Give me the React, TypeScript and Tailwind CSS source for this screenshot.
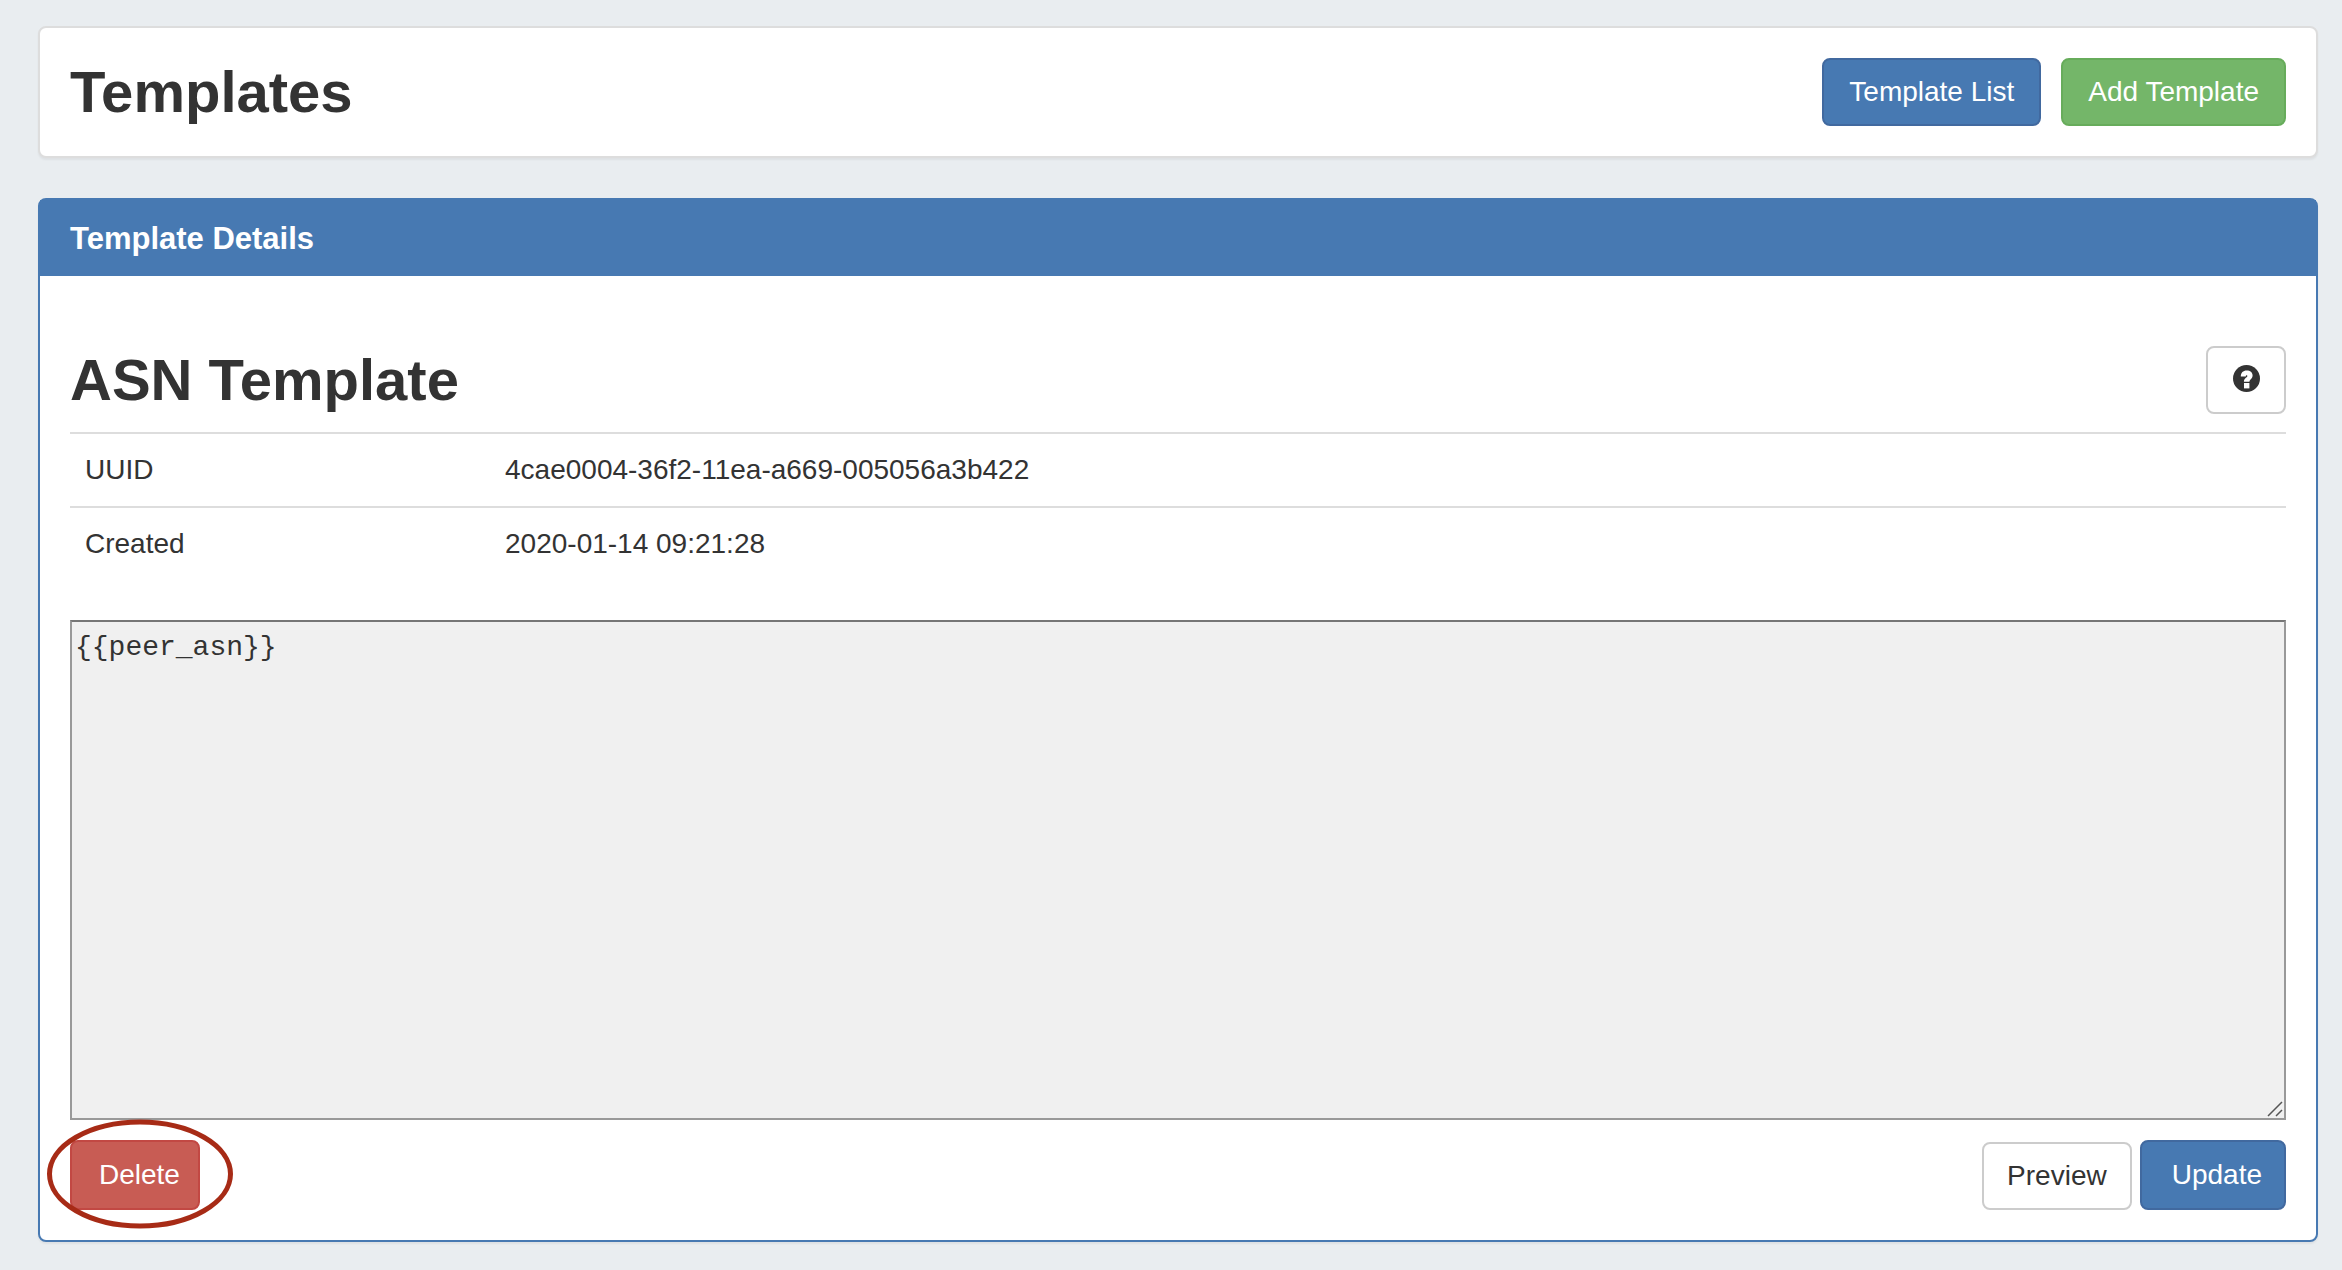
import type {ReactNode} from 'react';

const buttonBase = 'rounded-lg border-2 text-[28px] leading-10 whitespace-nowrap';

const details = [
  {label: 'UUID', value: '4cae0004-36f2-11ea-a669-005056a3b422'},
  {label: 'Created', value: '2020-01-14 09:21:28'},
];

const Button = ({className, children}: {className: string; children: ReactNode}) => {
  return (
    <button type="button" className={`${buttonBase} ${className}`}>
      {children}
    </button>
  );
};

const QuestionIcon = () => {
  return (
    <svg viewBox="0 0 27 27" className="size-[27px]" aria-hidden="true">
      <circle cx="13.5" cy="13.5" r="13.5" fill="#333333" />
      <path
        d="M7.8 11.6C7.8 7.8 10 5.6 13.7 5.6c3.5 0 5.9 2 5.9 4.900 0 3.300-2.900 3.900-3.200 6.200h-5.500c0-3.800 3.500-4.100 3.500-5.700 0-.500-.300-.800-.800-.800-.600 0-.800.500-.800 1.400z"
        fill="#ffffff"
      />
      <rect x="11" y="18" width="5.4" height="5.4" fill="#ffffff" />
    </svg>
  );
};

export default function App() {
  return (
    <main className="min-h-screen bg-[#e9edf0] pt-[26px] pr-6 pb-7 pl-[38px] font-['Liberation_Sans',Arial,sans-serif] text-[28px] leading-10 text-[#333333]">
      <header className="flex items-center justify-between rounded-lg border-2 border-[#dddddd] bg-white px-[30px] py-[30px] shadow-[0_2px_2px_rgba(0,0,0,0.05)]">
        <h1 className="text-[58px] leading-[68px] font-bold">Templates</h1>
        <div className="flex gap-5">
          <Button className="border-[#41699f] bg-[#4779b2] px-[25px] py-3 text-white">Template List</Button>
          <Button className="border-[#67ac5b] bg-[#74b669] px-[25px] py-3 text-white">Add Template</Button>
        </div>
      </header>

      <section className="mt-10 rounded-lg border-2 border-[#4779b2] bg-white shadow-[0_2px_2px_rgba(0,0,0,0.05)]">
        <h2 className="bg-[#4779b2] px-[30px] pt-[19px] pb-[17px] text-[31px] leading-10 font-bold text-white">
          Template Details
        </h2>

        <div className="px-[30px] pt-[70px] pb-[30px]">
          <div className="flex items-center justify-between">
            <h3 className="text-[58px] leading-[68px] font-bold">ASN Template</h3>
            <button
              type="button"
              aria-label="Help"
              className="flex h-[68px] w-20 items-center justify-center rounded-lg border-2 border-[#cccccc] bg-white pb-1"
            >
              <QuestionIcon />
            </button>
          </div>

          <table className="mt-[18px] w-full border-separate border-spacing-0 text-left">
            <tbody>
              {details.map(({label, value}) => (
                <tr key={label}>
                  <th scope="row" className="w-[19%] border-t-2 border-[#dddddd] px-[15px] py-4 font-normal">
                    {label}
                  </th>
                  <td className="border-t-2 border-[#dddddd] px-[14px] py-4">{value}</td>
                </tr>
              ))}
            </tbody>
          </table>

          <div className="relative mt-10">
            <textarea
              aria-label="Template"
              defaultValue="{{peer_asn}}"
              className="block h-[500px] w-full resize-none border-2 border-[#999999] border-t-[#767676] bg-[#f0f0f0] px-[3px] py-[6px] font-['Liberation_Mono',monospace] text-[28px] leading-10"
            />
            {/* resize grip */}
            <svg viewBox="0 0 16 16" className="absolute right-[3px] bottom-[3px] size-4" aria-hidden="true">
              <path d="M1 15 15 1M9 15l6-6" stroke="#555555" strokeWidth="1.5" fill="none" />
            </svg>
          </div>

          <div className="mt-5 flex items-end justify-between">
            <div className="relative">
              <Button className="border-[#c24843] bg-[#c85c54] py-[13px] pr-[18px] pl-[27px] text-white">Delete</Button>
              {/* highlight ring */}
              <svg
                viewBox="0 0 188 110"
                className="pointer-events-none absolute -top-[21px] -left-6 h-[110px] w-[188px]"
                aria-hidden="true"
              >
                <ellipse cx="94" cy="55" rx="90.5" ry="52" stroke="#a72b16" strokeWidth="5" fill="none" />
              </svg>
            </div>
            <div className="flex items-end gap-2">
              <Button className="border-[#cccccc] bg-white px-[23px] py-3">Preview</Button>
              <Button className="border-[#41699f] bg-[#4779b2] py-[13px] pr-[22px] pl-[30px] text-white">Update</Button>
            </div>
          </div>
        </div>
      </section>
    </main>
  );
}
